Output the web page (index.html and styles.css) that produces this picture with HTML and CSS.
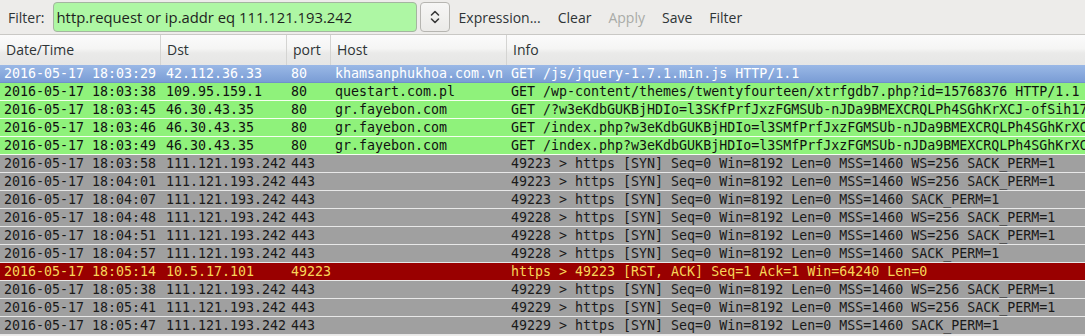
FILE: index.html
```html
<!DOCTYPE html>
<html>
<head>
<meta charset="utf-8">
<link rel="stylesheet" href="styles.css">
</head>
<body>
<div class="toolbar">
  <span class="lbl">Filter:</span>
  <div class="filter-input">http.request or ip.addr eq 111.121.193.242</div>
  <div class="combo">
    <svg width="12" height="16" viewBox="0 0 12 16"><path d="M2.5 6 L6 2.5 L9.5 6 M2.5 10 L6 13.5 L9.5 10" fill="none" stroke="#3a3a3a" stroke-width="1.6" stroke-linecap="round" stroke-linejoin="round"/></svg>
  </div>
  <span class="btn first">Expression...</span>
  <span class="btn">Clear</span>
  <span class="btn disabled">Apply</span>
  <span class="btn">Save</span>
  <span class="btn">Filter</span>
</div>
<div class="table">
  <div class="head">
    <div class="hc">Date/Time</div>
    <div class="hc">Dst</div>
    <div class="hc">port</div>
    <div class="hc">Host</div>
    <div class="hc last">Info</div>
  </div>
  <div class="row sel"><span>2016-05-17 18:03:29</span><span>42.112.36.33</span><span>80</span><span>khamsanphukhoa.com.vn</span><span>GET /js/jquery-1.7.1.min.js HTTP/1.1</span></div>
  <div class="row http"><span>2016-05-17 18:03:38</span><span>109.95.159.1</span><span>80</span><span>questart.com.pl</span><span>GET /wp-content/themes/twentyfourteen/xtrfgdb7.php?id=15768376 HTTP/1.1</span></div>
  <div class="row http"><span>2016-05-17 18:03:45</span><span>46.30.43.35</span><span>80</span><span>gr.fayebon.com</span><span>GET /?w3eKdbGUKBjHDIo=l3SKfPrfJxzFGMSUb-nJDa9BMEXCRQLPh4SGhKrXCJ-ofSih17</span></div>
  <div class="row http"><span>2016-05-17 18:03:46</span><span>46.30.43.35</span><span>80</span><span>gr.fayebon.com</span><span>GET /index.php?w3eKdbGUKBjHDIo=l3SMfPrfJxzFGMSUb-nJDa9BMEXCRQLPh4SGhKrXC</span></div>
  <div class="row http"><span>2016-05-17 18:03:49</span><span>46.30.43.35</span><span>80</span><span>gr.fayebon.com</span><span>GET /index.php?w3eKdbGUKBjHDIo=l3SMfPrfJxzFGMSUb-nJDa9BMEXCRQLPh4SGhKrXC</span></div>
  <div class="row tcp"><span>2016-05-17 18:03:58</span><span>111.121.193.242</span><span>443</span><span></span><span>49223 &gt; https [SYN] Seq=0 Win=8192 Len=0 MSS=1460 WS=256 SACK_PERM=1</span></div>
  <div class="row tcp"><span>2016-05-17 18:04:01</span><span>111.121.193.242</span><span>443</span><span></span><span>49223 &gt; https [SYN] Seq=0 Win=8192 Len=0 MSS=1460 WS=256 SACK_PERM=1</span></div>
  <div class="row tcp"><span>2016-05-17 18:04:07</span><span>111.121.193.242</span><span>443</span><span></span><span>49223 &gt; https [SYN] Seq=0 Win=8192 Len=0 MSS=1460 SACK_PERM=1</span></div>
  <div class="row tcp"><span>2016-05-17 18:04:48</span><span>111.121.193.242</span><span>443</span><span></span><span>49228 &gt; https [SYN] Seq=0 Win=8192 Len=0 MSS=1460 WS=256 SACK_PERM=1</span></div>
  <div class="row tcp"><span>2016-05-17 18:04:51</span><span>111.121.193.242</span><span>443</span><span></span><span>49228 &gt; https [SYN] Seq=0 Win=8192 Len=0 MSS=1460 WS=256 SACK_PERM=1</span></div>
  <div class="row tcp"><span>2016-05-17 18:04:57</span><span>111.121.193.242</span><span>443</span><span></span><span>49228 &gt; https [SYN] Seq=0 Win=8192 Len=0 MSS=1460 SACK_PERM=1</span></div>
  <div class="row rst"><span>2016-05-17 18:05:14</span><span>10.5.17.101</span><span>49223</span><span></span><span>https &gt; 49223 [RST, ACK] Seq=1 Ack=1 Win=64240 Len=0</span></div>
  <div class="row tcp"><span>2016-05-17 18:05:38</span><span>111.121.193.242</span><span>443</span><span></span><span>49229 &gt; https [SYN] Seq=0 Win=8192 Len=0 MSS=1460 WS=256 SACK_PERM=1</span></div>
  <div class="row tcp"><span>2016-05-17 18:05:41</span><span>111.121.193.242</span><span>443</span><span></span><span>49229 &gt; https [SYN] Seq=0 Win=8192 Len=0 MSS=1460 WS=256 SACK_PERM=1</span></div>
  <div class="row tcp"><span>2016-05-17 18:05:47</span><span>111.121.193.242</span><span>443</span><span></span><span>49229 &gt; https [SYN] Seq=0 Win=8192 Len=0 MSS=1460 SACK_PERM=1</span></div>
</div>
</body>
</html>
```
FILE: styles.css
```css
html, body {
  margin: 0;
  padding: 0;
  background: #edecea;
  overflow: hidden;
}
body {
  width: 1085px;
  height: 336px;
  font-family: "Open Sans", "DejaVu Sans", sans-serif;
  color: #2e3436;
}
.toolbar {
  height: 35px;
  box-sizing: border-box;
  display: flex;
  align-items: center;
  padding: 0 0 0 8px;
  border-bottom: 1px solid #c9c8c5;
  font-size: 14px;
}
.lbl {
  margin-right: 8px;
}
.filter-input {
  width: 364px;
  height: 30px;
  box-sizing: border-box;
  background: #aef7a4;
  border: 1px solid #a4b5a0;
  border-radius: 4px;
  padding-left: 3px;
  line-height: 28px;
  color: #1e1e1e;
  font-size: 14.8px;
  margin-top: -1px;
}
.combo {
  width: 30px;
  height: 30px;
  box-sizing: border-box;
  margin-left: 3px;
  margin-top: -1px;
  border: 1px solid #b6b5b1;
  border-radius: 4px;
  background: linear-gradient(#f6f6f5, #ebeae8);
  display: flex;
  align-items: center;
  justify-content: center;
}
.btn {
  margin-left: 17px;
  color: #2e3436;
}
.btn.first {
  margin-left: 9px;
}
.btn.disabled {
  color: #a9aba7;
}
.table {
  font-family: "DejaVu Sans Mono", monospace;
}
.head {
  height: 30px;
  display: grid;
  grid-template-columns: 161px 126px 44px 176px 1fr;
  background: linear-gradient(#fbfbfb 0%, #f5f5f4 45%, #eaeae9 60%, #e6e6e5 100%);
  font-family: "Open Sans", "DejaVu Sans", sans-serif;
  font-size: 14px;
  color: #2e3436;
}
.hc {
  padding-left: 6px;
  line-height: 30px;
  border-right: 1px solid #d4d4d2;
  white-space: nowrap;
  overflow: hidden;
}
.hc.last {
  border-right: none;
}
.row {
  height: 18px;
  box-sizing: border-box;
  display: grid;
  grid-template-columns: 161px 126px 44px 176px 1fr;
  font-size: 13.3px;
  line-height: 17px;
  border-bottom: 1px solid #ececec;
  white-space: nowrap;
}
.row span {
  padding-left: 4px;
  overflow: hidden;
}
.row span:nth-child(2) {
  padding-left: 5px;
}
.row.sel {
  background: linear-gradient(#9ab8e6, #7a9dd5);
  color: #ffffff;
  border-bottom: 1px solid #6f92cb;
}
.row.http {
  background: #8ff27b;
  color: #111;
  border-bottom: 1px solid #f4fff0;
}
.row.tcp {
  background: #a0a0a0;
  color: #1a1a1a;
  border-bottom: 1px solid #e8e8e8;
}
.row.rst {
  background: #990000;
  color: #f7d65a;
  border-bottom: 1px solid #e8e8e8;
}
```
